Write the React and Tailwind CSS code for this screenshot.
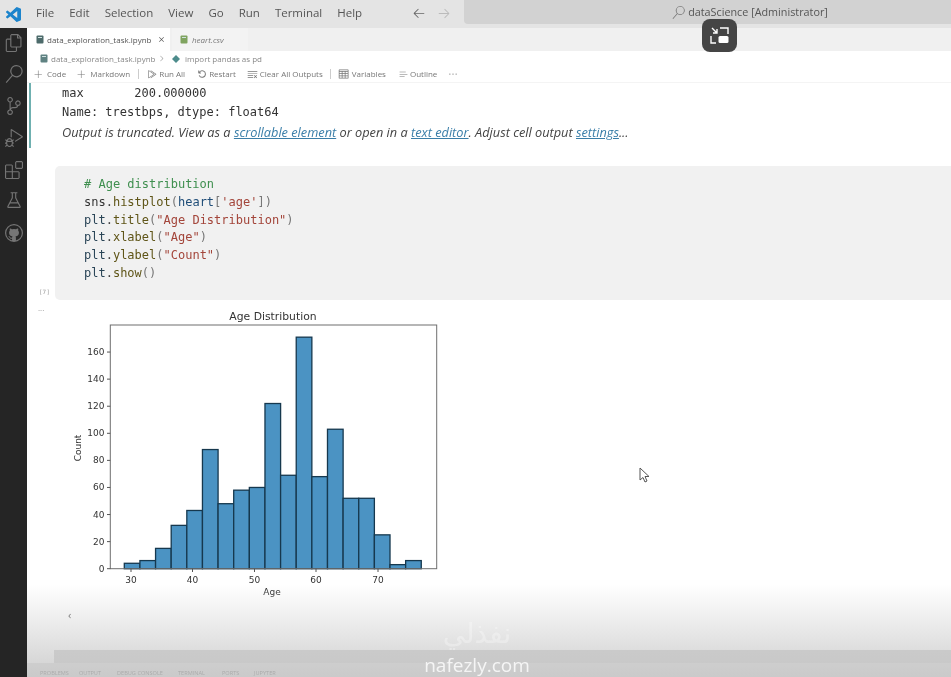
import React from "react";
import { VscFiles, VscSearch, VscSourceControl, VscDebugAlt, VscExtensions, VscBeaker, VscGithub, VscClose, VscChevronRight, VscAdd, VscRunAll, VscDebugRestart, VscClearAll, VscTable, VscListSelection, VscEllipsis, VscArrowLeft, VscArrowRight } from "react-icons/vsc";

const code = [
  [["# Age distribution", "text-[#3f8f4f]"]],
  [["sns", "text-[#333]"], [".", "text-[#444]"], ["histplot", "text-[#5f5518]"], ["(", "text-[#777]"], ["heart", "text-[#1f4d78]"], ["[", "text-[#777]"], ["'age'", "text-[#a3453a]"], ["])", "text-[#777]"]],
  [["plt", "text-[#2a4557]"], [".", "text-[#444]"], ["title", "text-[#5f5518]"], ["(", "text-[#777]"], ['"Age Distribution"', "text-[#a3453a]"], [")", "text-[#777]"]],
  [["plt", "text-[#2a4557]"], [".", "text-[#444]"], ["xlabel", "text-[#5f5518]"], ["(", "text-[#777]"], ['"Age"', "text-[#a3453a]"], [")", "text-[#777]"]],
  [["plt", "text-[#2a4557]"], [".", "text-[#444]"], ["ylabel", "text-[#5f5518]"], ["(", "text-[#777]"], ['"Count"', "text-[#a3453a]"], [")", "text-[#777]"]],
  [["plt", "text-[#2a4557]"], [".", "text-[#444]"], ["show", "text-[#5f5518]"], ["()", "text-[#777]"]],
];

const bars = [4, 6, 15, 32, 43, 88, 48, 58, 60, 122, 69, 171, 68, 103, 52, 52, 25, 3, 6];

function Chart() {
  // origin of this drawing is page (60,300)
  const x0 = 64.3, bw = 15.63, base = 268.7, unit = 1.354;
  const xt = [[30, 71], [40, 132.5], [50, 194.5], [60, 256], [70, 318]];
  const yt = [0, 20, 40, 60, 80, 100, 120, 140, 160];
  return (
    <svg width="400" height="310" viewBox="0 0 400 310" className="block shrink-0">
      <g fontFamily="'DejaVu Sans', sans-serif" fill="#333">
        <text x="213" y="20" textAnchor="middle" fontSize="10.8">Age Distribution</text>
        {bars.map((v, i) => (
          <rect key={i} x={x0 + i * bw} y={base - v * unit} width={bw} height={v * unit} fill="#4b93c3" stroke="#16384e" strokeWidth="1.3" />
        ))}
        <rect x="50.3" y="25" width="326.4" height="243.7" fill="none" stroke="#6e6e6e" strokeWidth="1" />
        {xt.map(([t, x]) => (
          <g key={t}>
            <line x1={x} x2={x} y1={268.7} y2={272} stroke="#555" />
            <text x={x} y="283" textAnchor="middle" fontSize="9">{t}</text>
          </g>
        ))}
        {yt.map((t) => (
          <g key={t}>
            <line x1="47" x2="50.3" y1={base - t * unit} y2={base - t * unit} stroke="#555" />
            <text x="44.5" y={base - t * unit + 3} textAnchor="end" fontSize="9">{t}</text>
          </g>
        ))}
        <text x="212" y="295" textAnchor="middle" fontSize="9">Age</text>
        <text transform="translate(21 148) rotate(-90)" textAnchor="middle" fontSize="9">Count</text>
      </g>
    </svg>
  );
}

function Vscode() {
  return (
    <svg width="15" height="15" viewBox="0 0 24 24" fill="#1c84cc">
      <path d="M23.15 2.587L18.21.21a1.494 1.494 0 0 0-1.705.29l-9.46 8.63-4.12-3.128a.999.999 0 0 0-1.276.057L.327 7.261A1 1 0 0 0 .326 8.74L3.899 12 .326 15.26a1 1 0 0 0 .001 1.479L1.65 17.94a.999.999 0 0 0 1.276.057l4.12-3.128 9.46 8.63a1.492 1.492 0 0 0 1.704.29l4.942-2.377A1.5 1.5 0 0 0 24 20.06V3.939a1.5 1.5 0 0 0-.85-1.352zm-5.146 14.861L10.826 12l7.178-5.448v10.896z" />
    </svg>
  );
}

function NotebookIcon({ color = "#4d6b6b" }) {
  return (
    <svg width="8" height="9" viewBox="0 0 8 9" className="shrink-0"><rect x="0.5" y="0.5" width="7" height="8" rx="1" fill={color} /><rect x="2" y="2" width="4" height="1" fill="#cfe0e0" /></svg>
  );
}

const menu = ["File", "Edit", "Selection", "View", "Go", "Run", "Terminal", "Help"];
const acts = [
  [VscFiles, "mt-[6px]"], [VscSearch, "mt-[13px]"], [VscSourceControl, "mt-[14px]"], [VscDebugAlt, "mt-[14px]"], [VscExtensions, "mt-[14px]"], [VscBeaker, "mt-[12px]"], [VscGithub, "mt-[15px]"],
];

export default function App() {
  return (
    <div className="relative flex h-[677px] w-[951px] flex-col overflow-hidden bg-white blur-[0.6px] font-['Open_Sans',sans-serif]">
      {/* title bar */}
      <div className="flex h-[28px] shrink-0 bg-[#e4e4e4]">
        <div className="flex w-[36px] items-center justify-center pr-[10px]"><Vscode /></div>
        <div className="flex items-center gap-[15px] pb-[3px] text-[11.5px] text-[#555]">
          {menu.map((m) => <span key={m}>{m}</span>)}
        </div>
        <div className="ml-[50px] flex items-center gap-[11px] pb-[3px] text-[#666]">
          <VscArrowLeft size={14} />
          <VscArrowRight size={14} className="text-[#bbb]" />
        </div>
        <div className="ml-[13px] flex h-[24px] flex-1 items-center rounded-bl-[4px] bg-[#d2d2d2] pl-[208px] text-[10.8px] text-[#555]">
          <VscSearch size={13} className="mr-[3px] text-[#777]" />
          <span>dataScience [Administrator]</span>
        </div>
      </div>

      <div className="flex min-h-0 flex-1">
        {/* activity bar */}
        <div className="flex w-[27px] shrink-0 flex-col items-center bg-[#252525] text-[#757575]">
          {acts.map(([I, m], i) => <I key={i} size={18} className={m} />)}
        </div>

        <div className="flex min-w-0 flex-1 flex-col">
          {/* tabs */}
          <div className="flex h-[23px] shrink-0 bg-[#f0f0f0] text-[8px] text-[#555]">
            <div className="flex w-[143px] items-center bg-white pl-[9px]">
              <NotebookIcon />
              <span className="ml-[3px] w-[107px] whitespace-nowrap">data_exploration_task.ipynb</span>
              <VscClose size={9} className="ml-[3px]" />
            </div>
            <div className="ml-[2px] flex w-[76px] items-center bg-[#f3f3f3] pl-[8px] text-[#777]">
              <NotebookIcon color="#7fa35f" />
              <span className="ml-[4px] italic">heart.csv</span>
            </div>
          </div>
          {/* breadcrumb */}
          <div className="flex h-[15px] shrink-0 items-center pl-[13px] text-[8px] text-[#888]">
            <NotebookIcon color="#5f8282" />
            <span className="ml-[3px] w-[104px] whitespace-nowrap">data_exploration_task.ipynb</span>
            <VscChevronRight size={9} className="ml-[2px] mr-[6px]" />
            <svg width="8" height="8" viewBox="0 0 8 8" className="shrink-0"><path d="M4 0l4 4-4 4-4-4z" fill="#4d8c8c" /></svg>
            <span className="ml-[5px]">import pandas as pd</span>
          </div>
          {/* notebook toolbar */}
          <div className="flex h-[17px] shrink-0 items-center border-b border-[#f4f4f4] pl-[7px] text-[8px] text-[#777]">
            <VscAdd size={9} /><span className="ml-[4px]">Code</span>
            <VscAdd size={9} className="ml-[11px]" /><span className="ml-[4px]">Markdown</span>
            <span className="mx-[8px] h-[10px] w-px bg-[#ccc]" />
            <VscRunAll size={10} /><span className="ml-[2px]">Run All</span>
            <VscDebugRestart size={10} className="ml-[12px]" /><span className="ml-[2px]">Restart</span>
            <VscClearAll size={11} className="ml-[11px]" /><span className="ml-[2px]">Clear All Outputs</span>
            <span className="mx-[7px] h-[10px] w-px bg-[#ccc]" />
            <VscTable size={12} /><span className="ml-[2px]">Variables</span>
            <VscListSelection size={9} className="ml-[13px]" /><span className="ml-[2px]">Outline</span>
            <VscEllipsis size={10} className="ml-[11px]" />
          </div>

          {/* output */}
          <div className="flex h-[65px] shrink-0">
            <div className="ml-[2px] w-[2px] bg-[#6fb0b0]" />
            <div className="ml-[31px] pt-px">
              <div className="font-['DejaVu_Sans_Mono',monospace] text-[12px] leading-[19px] text-[#333]">
                <div className="whitespace-pre">{"max       200.000000"}</div>
                <div className="whitespace-pre">Name: trestbps, dtype: float64</div>
              </div>
              <div className="whitespace-nowrap text-[12.75px] italic leading-[21px] text-[#444]">
                Output is truncated. View as a <span className="text-[#3a7ea8] underline">scrollable element</span> or open in a <span className="text-[#3a7ea8] underline">text editor</span>. Adjust cell output <span className="text-[#3a7ea8] underline">settings</span>...
              </div>
            </div>
          </div>

          {/* code cell */}
          <div className="mt-[18px] flex h-[134px] shrink-0">
            <div className="flex w-[28px] shrink-0 items-end pb-[4px] pl-[12px] font-['DejaVu_Sans_Mono',monospace] text-[6px] text-[#999]">[7]</div>
            <div className="flex-1 rounded-l-[5px] bg-[#f1f1f1] pl-[29px] pt-[10px] font-['DejaVu_Sans_Mono',monospace] text-[12px] leading-[17.8px]">
              {code.map((l, i) => (
                <div key={i} className="whitespace-pre">
                  {l.map(([t, c], j) => <span key={j} className={c}>{t}</span>)}
                </div>
              ))}
            </div>
          </div>

          {/* plot */}
          <div className="flex shrink-0">
            <div className="w-[33px] shrink-0 pl-[11px] pt-[3px] text-[8px] leading-[10px] text-[#999]">...</div>
            <Chart />
          </div>
          <div className="pl-[41px] text-[11px] leading-[10px] text-[#666]">‹</div>

          {/* bottom band + panel */}
          <div className="mt-auto ml-[27px] h-[13px] shrink-0 bg-[#d2d2d2]" />
          <div className="flex h-[14px] shrink-0 items-end bg-[#e2e2e2] pl-[13px] text-[5.6px] leading-[7px] text-[#555]">
            <span className="w-[39px] whitespace-nowrap">PROBLEMS</span>
            <span className="w-[38px] whitespace-nowrap">OUTPUT</span>
            <span className="w-[61px] whitespace-nowrap">DEBUG CONSOLE</span>
            <span className="w-[44px] whitespace-nowrap">TERMINAL</span>
            <span className="w-[32px] whitespace-nowrap">PORTS</span>
            <span className="whitespace-nowrap">JUPYTER</span>
          </div>
        </div>
      </div>

      {/* video player fade, watermark, overlay button and pointer */}
      <div className="pointer-events-none absolute bottom-0 left-[27px] right-0 h-[92px] bg-gradient-to-b from-white/0 to-[#c4c4c4]/80" />
      <div className="pointer-events-none absolute left-[423px] top-[620px] text-center leading-none text-white">
        <div dir="rtl" className="w-[108px] font-['DejaVu_Sans',sans-serif] text-[28px] opacity-30">نفذلي</div>
        <div className="mt-[8px] text-[19px] opacity-80">nafezly.com</div>
      </div>
      <div className="absolute left-[702px] top-[19px] flex h-[33px] w-[35px] items-center justify-center rounded-lg bg-[#454545]">
        <svg width="21" height="19" viewBox="0 0 21 19" fill="none" stroke="#fff" strokeWidth="1.4">
          <path d="M11 2h8v6" />
          <path d="M2 10v7h5" />
          <path d="M3 2l5 5M4 7h4V3" />
          <rect x="9.5" y="10" width="10" height="7" rx="1.5" fill="#fff" stroke="none" />
        </svg>
      </div>
      <svg className="absolute left-[639px] top-[467px]" width="11" height="17" viewBox="0 0 11 17">
        <path d="M1 1v12l3-2.5 2 4.5 2-1-2-4.5h4z" fill="#fff" stroke="#555" strokeWidth="1" />
      </svg>
    </div>
  );
}
